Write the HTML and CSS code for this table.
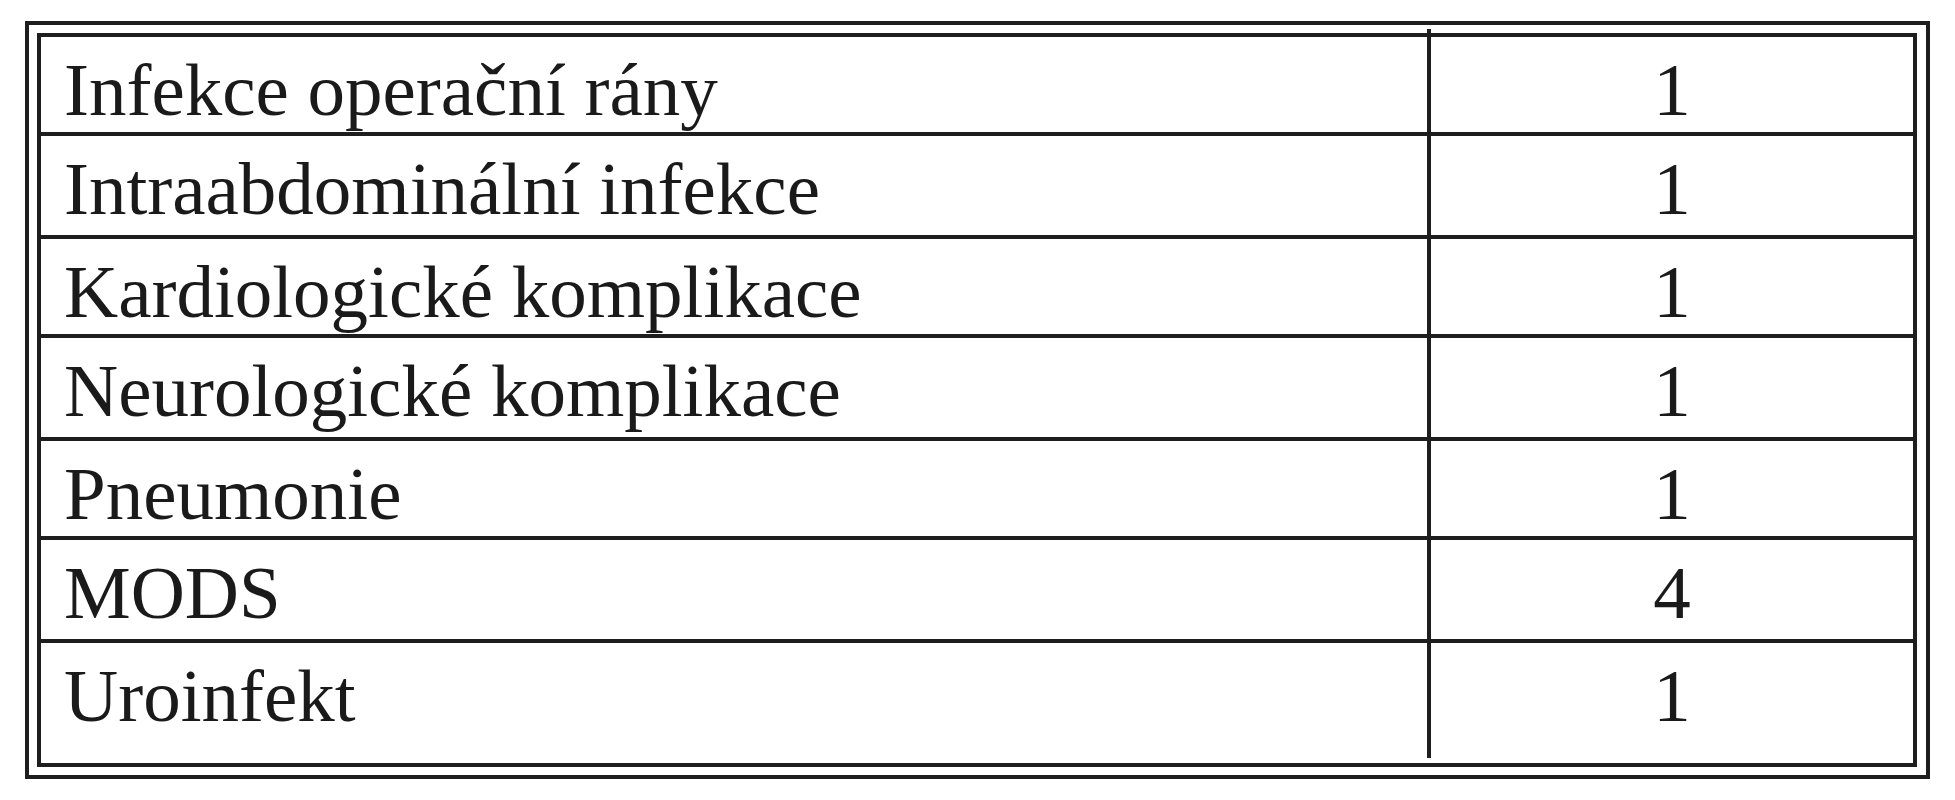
FILE: index.html
```html
<!DOCTYPE html>
<html lang="cs">
<head>
<meta charset="utf-8">
<title>Komplikace</title>
<link rel="stylesheet" href="styles.css">
</head>
<body>
<div class="frame">
  <div class="table">
    <div class="row"><div class="label">Infekce operační rány</div><div class="value">1</div></div>
    <div class="row"><div class="label">Intraabdominální infekce</div><div class="value">1</div></div>
    <div class="row"><div class="label">Kardiologické komplikace</div><div class="value">1</div></div>
    <div class="row"><div class="label">Neurologické komplikace</div><div class="value">1</div></div>
    <div class="row"><div class="label">Pneumonie</div><div class="value">1</div></div>
    <div class="row"><div class="label">MODS</div><div class="value">4</div></div>
    <div class="row"><div class="label">Uroinfekt</div><div class="value">1</div></div>
  </div>
</div>
</body>
</html>
```

FILE: styles.css
```css
html, body {
  margin: 0;
  padding: 0;
  background: #ffffff;
}

body {
  padding: 21px 0 0 25px;
  font-family: "Liberation Serif", "Times New Roman", serif;
  color: #1a1a1a;
}

.frame {
  box-sizing: border-box;
  width: 1905px;
  height: 758px;
  border: 4px solid #1e1e1e;
  padding: 8px 9px 8px 8px;
}

.table {
  position: relative;
  box-sizing: border-box;
  width: 1880px;
  height: 734px;
  border: 4px solid #1e1e1e;
  display: flex;
  flex-direction: column;
}

.table::after {
  content: "";
  position: absolute;
  left: 1386px;
  top: -8px;
  bottom: 5px;
  width: 4px;
  background: #1e1e1e;
}

.row {
  display: flex;
  height: 95px;
  border-bottom: 4px solid #1e1e1e;
  font-size: 75px;
  line-height: 80px;
}

.row:nth-child(even) {
  height: 99px;
}

.row:last-child {
  height: 120px;
  border-bottom: none;
}

.label {
  width: 1390px;
  flex: none;
  box-sizing: border-box;
  padding: 13px 0 0 23px;
  white-space: nowrap;
}

.value {
  flex: 1;
  padding-top: 13px;
  text-align: center;
}
```
